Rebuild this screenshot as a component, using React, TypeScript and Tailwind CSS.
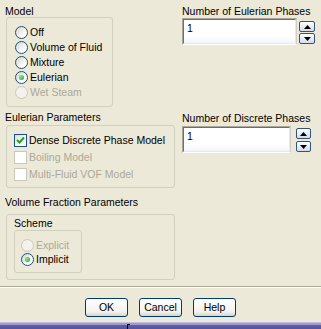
import React from "react";

const cx = (...a: (string | false | undefined)[]) => a.filter(Boolean).join(" ");

function Radio({
  label,
  checked,
  disabled,
  h = "h-[15px]",
}: {
  label: string;
  checked?: boolean;
  disabled?: boolean;
  h?: string;
}) {
  return (
    <div className={cx(h, "flex items-center")}>
      <span
        className={cx(
          "w-[13px] h-[13px] rounded-full border flex items-center justify-center shrink-0",
          disabled
            ? "border-[#CAC8BB] bg-[#F3F2EC]"
            : "border-[#1C5180] bg-[linear-gradient(135deg,#d4d3ca,#ffffff_75%)]"
        )}
      >
        {checked && (
          <span className="w-[5px] h-[5px] rounded-full bg-[radial-gradient(circle_at_35%_35%,#8be687,#21A121)]" />
        )}
      </span>
      <span className={cx("ml-[2px]", disabled ? "text-[#ACA899]" : "text-black")}>{label}</span>
    </div>
  );
}

function Check({ label, checked, disabled }: { label: string; checked?: boolean; disabled?: boolean }) {
  return (
    <div className="h-[17px] flex items-center">
      <span
        className={cx(
          "w-[13px] h-[13px] border flex items-center justify-center shrink-0",
          disabled
            ? "border-[#CAC8BB] bg-white"
            : "border-[#1C5180] bg-[linear-gradient(135deg,#dcdcd4,#ffffff_75%)]"
        )}
      >
        {checked && (
          <svg width="9" height="9" viewBox="0 0 9 9">
            <polyline points="1,4 3.5,6.5 8,1.5" fill="none" stroke="#21A121" strokeWidth="2" />
          </svg>
        )}
      </span>
      <span className={cx("ml-[2px]", disabled ? "text-[#ACA899]" : "text-black")}>{label}</span>
    </div>
  );
}

function SpinBtn({ up, w }: { up?: boolean; w: string }) {
  return (
    <div
      className={cx(
        w,
        "h-[11px] rounded-[2px] border border-[#34527A] bg-[linear-gradient(#ffffff,#d2dcea)] flex items-center justify-center"
      )}
    >
      <svg width="7" height="4" viewBox="0 0 7 4">
        {up ? <polygon points="0,4 7,4 3.5,0" fill="black" /> : <polygon points="0,0 7,0 3.5,4" fill="black" />}
      </svg>
    </div>
  );
}

function NumInput({ w }: { w: string }) {
  return (
    <div className={cx(w, "h-[27px] border border-t-[#ACA899] border-l-[#ACA899] border-r-[#D4D0C8] border-b-white")}>
      <div className="h-full border border-t-[#716F64] border-l-[#716F64] border-r-[#ECE9D8] border-b-[#ECE9D8] bg-[linear-gradient(#ffffff_70%,#f2f5f9)] pl-[3px] pt-[2px]">
        1
      </div>
    </div>
  );
}

function Btn({ children }: { children: React.ReactNode }) {
  return (
    <div className="w-[43px] h-[19px] rounded-[3px] border border-[#003C74] bg-[linear-gradient(#ffffff,#f3f2ee_75%,#d9d4c8)] flex items-center justify-center text-black">
      {children}
    </div>
  );
}

export default function App() {
  return (
    <div className="w-[321px] h-[329px] bg-[#ECE9D8] flex flex-col font-['Liberation_Sans',Arial,sans-serif] text-[10.5px] leading-[13px] text-black overflow-hidden">
      {/* Row 1 */}
      <div className="flex pt-[5px]">
        <div className="w-[177px] pl-[5px]">
          <div className="h-[12px]">Model</div>
          <div className="ml-[1px] w-[107px] rounded-[3px] border border-[#D0D0BF] pt-[7px] pb-[6px] pl-[8px]">
            <Radio label="Off" />
            <Radio label="Volume of Fluid" />
            <Radio label="Mixture" />
            <Radio label="Eulerian" checked />
            <Radio label="Wet Steam" disabled />
          </div>
        </div>
        <div className="pl-[5px]">
          <div className="h-[13px]">Number of Eulerian Phases</div>
          <div className="flex">
            <NumInput w="w-[115px]" />
            <div className="ml-[2px] pt-[3px] flex flex-col gap-[1px]">
              <SpinBtn up w="w-[16px]" />
              <SpinBtn w="w-[16px]" />
            </div>
          </div>
        </div>
      </div>

      {/* Row 2 */}
      <div className="flex">
        <div className="w-[177px] pl-[5px] pt-[4px]">
          <div className="h-[14px]">Eulerian Parameters</div>
          <div className="ml-[1px] w-[169px] rounded-[3px] border border-[#D0D0BF] pt-[6px] pb-[4px] pl-[7px]">
            <Check label="Dense Discrete Phase Model" checked />
            <Check label="Boiling Model" disabled />
            <Check label="Multi-Fluid VOF Model" disabled />
          </div>
        </div>
        <div className="pl-[5px] pt-[5px]">
          <div className="h-[14px]">Number of Discrete Phases</div>
          <div className="flex">
            <NumInput w="w-[109px]" />
            <div className="ml-[5px] pt-[2px] flex flex-col gap-[2px]">
              <SpinBtn up w="w-[15px]" />
              <SpinBtn w="w-[15px]" />
            </div>
          </div>
        </div>
      </div>

      {/* Row 3 */}
      <div className="pl-[5px] pt-[8px]">
        <div className="h-[18px]">Volume Fraction Parameters</div>
        <div className="ml-[1px] w-[169px] rounded-[3px] border border-[#D0D0BF] pt-[2px] pb-[6px] pl-[7px]">
          <div className="h-[13px]">Scheme</div>
          <div className="w-[68px] rounded-[3px] border border-[#D0D0BF] pt-[7px] pb-[6px] pl-[6px]">
            <Radio label="Explicit" disabled h="h-[14px]" />
            <Radio label="Implicit" checked h="h-[14px]" />
          </div>
        </div>
      </div>

      {/* Separator */}
      <div className="mt-[6px] h-[1px] bg-[#ACA899]" />
      <div className="h-[1px] bg-white" />

      {/* Buttons */}
      <div className="mt-[10px] flex justify-center gap-[11px]">
        <Btn>OK</Btn>
        <Btn>Cancel</Btn>
        <Btn>Help</Btn>
      </div>

      {/* Bottom bar */}
      <div className="relative mt-auto h-[7px] bg-[linear-gradient(#c3c0e4_0,#c3c0e4_1px,#9d9ad0_1px,#9d9ad0_3px,#615ea8_3px,#55529e_100%)]">
        <div className="absolute left-[127px] top-[2px] w-[1px] h-[5px] bg-black" />
        <div className="absolute left-[127px] top-[2px] w-[3px] h-[1px] bg-black" />
      </div>
    </div>
  );
}
